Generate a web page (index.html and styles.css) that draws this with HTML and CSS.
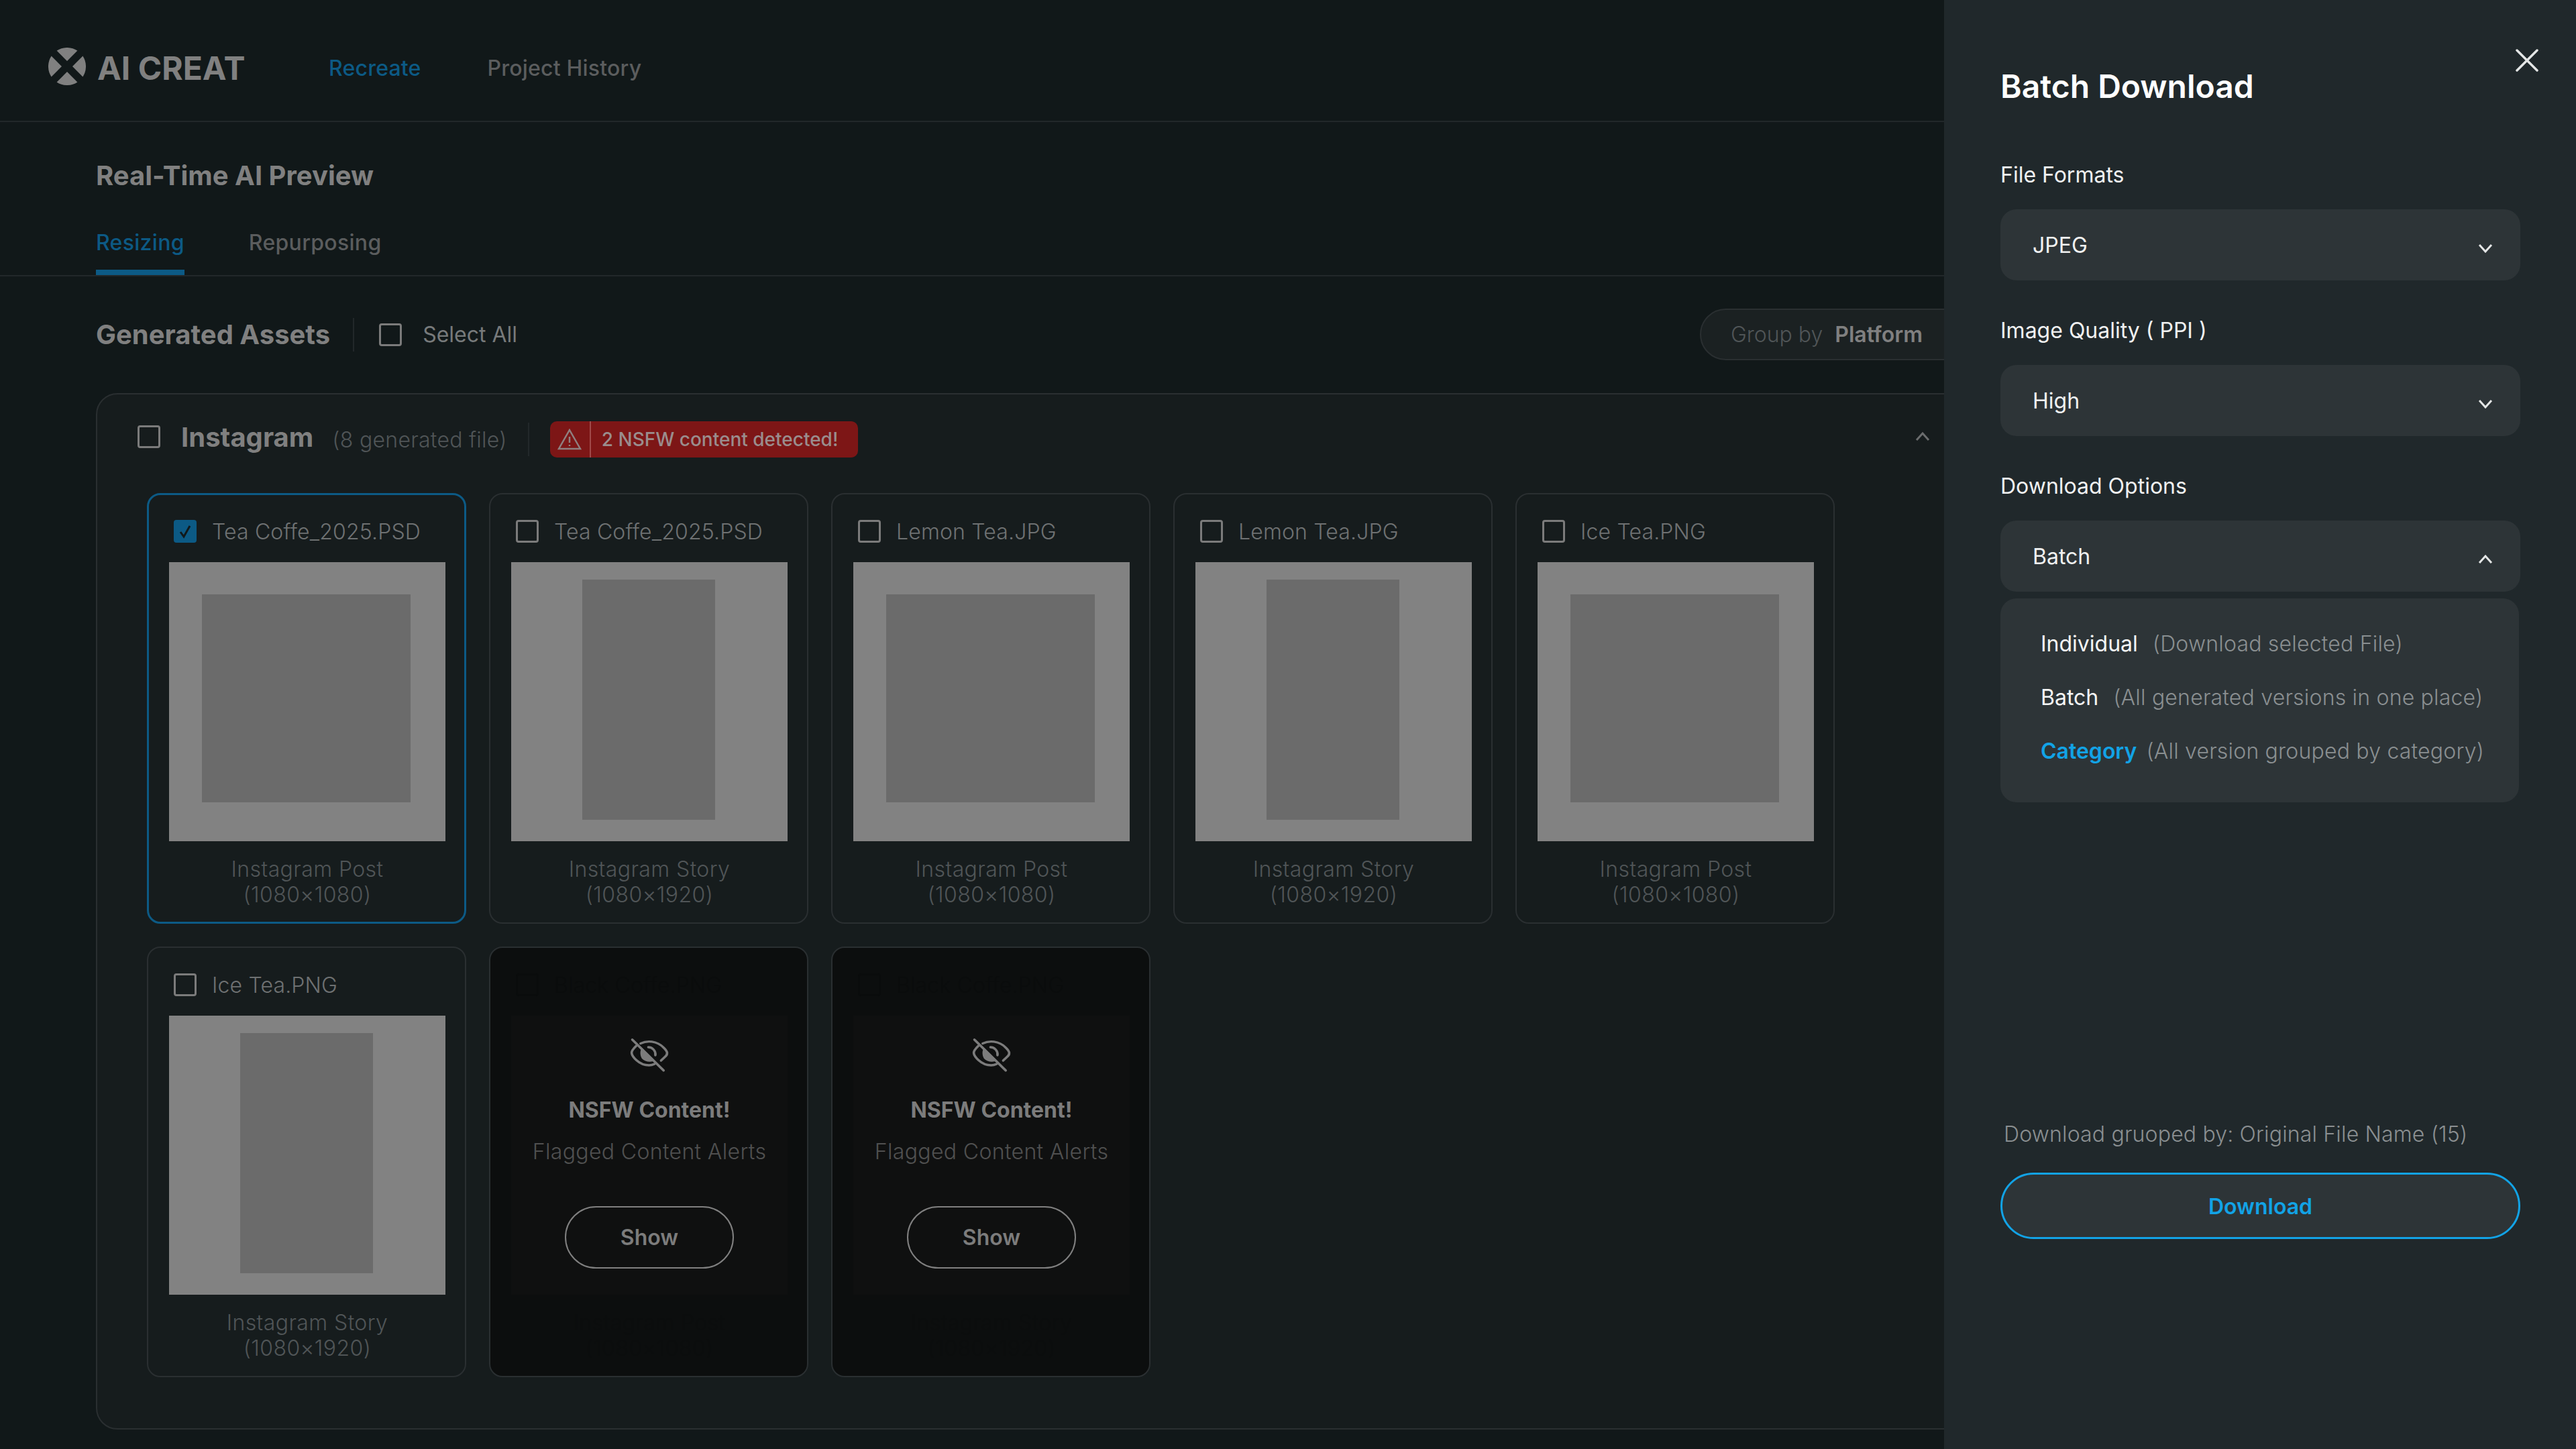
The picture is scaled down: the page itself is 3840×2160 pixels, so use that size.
FILE: index.html
```html
<!DOCTYPE html>
<html>
	<head>
		<meta http-equiv="content-type" content="text/html; charset=utf-8" />
		<title>AI CREAT - Batch Download</title>
		<link rel="stylesheet" href="styles.css">
	</head>
	<body>
		<div class="app">
			<header class="topbar">
				<div class="logo">
					<svg class="logo-mark" viewBox="0 0 56 56">
						<path d="M28 20 L12.6 4.6 A28 28 0 0 1 43.4 4.6 Z" />
						<path d="M28 36 L12.6 51.4 A28 28 0 0 0 43.4 51.4 Z" />
						<path d="M20 28 L4.6 12.6 A28 28 0 0 0 4.6 43.4 Z" />
						<path d="M36 28 L51.4 12.6 A28 28 0 0 1 51.4 43.4 Z" />
					</svg>
					<span class="logo-text">AI CREAT</span>
				</div>
				<nav class="nav">
					<a class="nav-link active">Recreate</a>
					<a class="nav-link">Project History</a>
				</nav>
			</header>

			<div class="heading">
				<h1 class="page-title">Real-Time AI Preview</h1>
				<div class="tabs">
					<a class="tab active">Resizing</a>
					<a class="tab">Repurposing</a>
				</div>
			</div>

			<main class="content">
				<div class="toolbar">
					<h2 class="assets-title">Generated Assets</h2>
					<span class="vline"></span>
					<span class="checkbox"></span>
					<span class="select-all">Select All</span>
					<div class="group-by">
						<span class="group-label">Group by</span>
						<span class="group-value">Platform</span>
						<svg class="chevron-small" viewBox="0 0 22 14"><path d="M2 2 L11 12 L20 2" /></svg>
					</div>
				</div>

				<section class="platform">
					<div class="platform-head">
						<span class="checkbox"></span>
						<span class="platform-name">Instagram</span>
						<span class="platform-count">(8 generated file)</span>
						<span class="vline"></span>
						<div class="badge">
							<span class="badge-icon">
								<svg viewBox="0 0 36 32"><path d="M18 2 L34 30 L2 30 Z" /><path d="M18 12 V21 M18 24 V26" /></svg>
							</span>
							<span class="badge-text">2 NSFW content detected!</span>
						</div>
						<svg class="chevron-up" viewBox="0 0 22 14"><path d="M2 12 L11 2 L20 12" /></svg>
					</div>

					<div class="cards">
						<div class="card selected">
							<div class="card-head">
								<span class="checkbox checked"><svg viewBox="0 0 34 34"><path d="M10 18 L15 25 L24 9" /></svg></span>
								<span class="card-name">Tea Coffe_2025.PSD</span>
							</div>
							<div class="preview"><div class="inner square"></div></div>
							<div class="caption">Instagram Post<br>(1080×1080)</div>
						</div>
						<div class="card">
							<div class="card-head">
								<span class="checkbox"></span>
								<span class="card-name">Tea Coffe_2025.PSD</span>
							</div>
							<div class="preview"><div class="inner story"></div></div>
							<div class="caption">Instagram Story<br>(1080×1920)</div>
						</div>
						<div class="card">
							<div class="card-head">
								<span class="checkbox"></span>
								<span class="card-name">Lemon Tea.JPG</span>
							</div>
							<div class="preview"><div class="inner square"></div></div>
							<div class="caption">Instagram Post<br>(1080×1080)</div>
						</div>
						<div class="card">
							<div class="card-head">
								<span class="checkbox"></span>
								<span class="card-name">Lemon Tea.JPG</span>
							</div>
							<div class="preview"><div class="inner story"></div></div>
							<div class="caption">Instagram Story<br>(1080×1920)</div>
						</div>
						<div class="card">
							<div class="card-head">
								<span class="checkbox"></span>
								<span class="card-name">Ice Tea.PNG</span>
							</div>
							<div class="preview"><div class="inner square"></div></div>
							<div class="caption">Instagram Post<br>(1080×1080)</div>
						</div>
						<div class="card">
							<div class="card-head">
								<span class="checkbox"></span>
								<span class="card-name">Ice Tea.PNG</span>
							</div>
							<div class="preview"><div class="inner story"></div></div>
							<div class="caption">Instagram Story<br>(1080×1920)</div>
						</div>
						<div class="card nsfw">
							<div class="card-head">
								<span class="checkbox"></span>
								<span class="card-name">Black Coffe.PNG</span>
							</div>
							<div class="preview">
								<svg class="eye-off" viewBox="0 0 56 56" preserveAspectRatio="none">
									<path d="M15 10.5 C24 6 38 6 48 17 C54 23 54 27 49 31 L44 36" />
									<path d="M9 14 C5 18 2 22 2.5 25 C3 29 12 43 27 43 C30 43 33 42 35 41" />
									<path d="M26 16 C32 16 37 22 36 28" />
									<path class="pupil" d="M17 17 L35 36 C30 39 21 38 17 33 C14 28 14 21 17 17 Z" />
									<path d="M3.3 4.7 L47.7 50.7" />
								</svg>
								<div class="nsfw-title">NSFW Content!</div>
								<div class="nsfw-sub">Flagged Content Alerts</div>
								<button class="show-btn">Show</button>
							</div>
							<div class="caption">Instagram Post<br>(1080×1080)</div>
						</div>
						<div class="card nsfw">
							<div class="card-head">
								<span class="checkbox"></span>
								<span class="card-name">Black Coffe.PNG</span>
							</div>
							<div class="preview">
								<svg class="eye-off" viewBox="0 0 56 56" preserveAspectRatio="none">
									<path d="M15 10.5 C24 6 38 6 48 17 C54 23 54 27 49 31 L44 36" />
									<path d="M9 14 C5 18 2 22 2.5 25 C3 29 12 43 27 43 C30 43 33 42 35 41" />
									<path d="M26 16 C32 16 37 22 36 28" />
									<path class="pupil" d="M17 17 L35 36 C30 39 21 38 17 33 C14 28 14 21 17 17 Z" />
									<path d="M3.3 4.7 L47.7 50.7" />
								</svg>
								<div class="nsfw-title">NSFW Content!</div>
								<div class="nsfw-sub">Flagged Content Alerts</div>
								<button class="show-btn">Show</button>
							</div>
							<div class="caption">Instagram Story<br>(1080×1920)</div>
						</div>
					</div>
				</section>
			</main>
		</div>

		<aside class="drawer">
			<svg class="close" viewBox="0 0 34 34"><path d="M2 2 L32 32 M32 2 L2 32" /></svg>
			<h2 class="drawer-title">Batch Download</h2>

			<label class="field-label first">File Formats</label>
			<div class="select">
				<span>JPEG</span>
				<svg class="chevron" viewBox="0 0 22 14"><path d="M2 2 L11 12 L20 2" /></svg>
			</div>

			<label class="field-label">Image Quality ( PPI )</label>
			<div class="select">
				<span>High</span>
				<svg class="chevron" viewBox="0 0 22 14"><path d="M2 2 L11 12 L20 2" /></svg>
			</div>

			<label class="field-label">Download Options</label>
			<div class="select">
				<span>Batch</span>
				<svg class="chevron" viewBox="0 0 22 14"><path d="M2 12 L11 2 L20 12" /></svg>
			</div>
			<ul class="options">
				<li class="option"><span class="option-name">Individual</span><span class="option-hint">(Download selected File)</span></li>
				<li class="option"><span class="option-name">Batch</span><span class="option-hint">(All generated versions in one place)</span></li>
				<li class="option current"><span class="option-name">Category</span><span class="option-hint">(All version grouped by category)</span></li>
			</ul>

			<p class="note">Download gruoped by: Original File Name (15)</p>
			<button class="download-btn">Download</button>
		</aside>
	</body>
</html>
```

FILE: styles.css
```css
* {
	box-sizing: border-box;
}
html, body {
	margin: 0;
	width: 3840px;
	height: 2160px;
	overflow: hidden;
}
body {
	position: relative;
	background: #111819;
	font-family: "Inter", "Liberation Sans", sans-serif;
	font-size: 32px;
}
h1, h2, p, ul {
	margin: 0;
	padding: 0;
}

.topbar {
	display: flex;
	align-items: center;
	height: 182px;
	padding-top: 22px;
	padding-left: 72px;
	border-bottom: 2px solid #22282a;
}
.logo {
	display: flex;
	align-items: center;
	gap: 17px;
	width: 418px;
}
.logo-mark {
	width: 56px;
	height: 56px;
	margin-top: -4px;
	fill: #808080;
}
.logo-text {
	font-size: 48px;
	font-weight: 700;
	color: #808080;
}
.nav {
	display: flex;
	gap: 99px;
	letter-spacing: 0.2px;
}
.nav-link {
	font-weight: 500;
	color: #5b5d5e;
}
.nav-link.active {
	color: #0c5a85;
}

.heading {
	padding-top: 56px;
}
.page-title {
	padding-left: 143px;
	font-size: 40px;
	line-height: 48px;
	font-weight: 700;
	color: #808080;
}
.tabs {
	display: flex;
	gap: 96px;
	margin-top: 56px;
	padding-left: 143px;
	border-bottom: 2px solid #22282a;
}
.tab {
	height: 68px;
	line-height: 40px;
	border-bottom: 8px solid transparent;
	font-weight: 500;
	letter-spacing: 0.3px;
	color: #5b5d5e;
}
.tab.active {
	color: #0c5a85;
	border-bottom-color: #0c5a85;
}

.content {
	width: 2960px;
	padding-left: 143px;
}
.toolbar {
	display: flex;
	align-items: center;
	height: 77px;
	margin-top: 48px;
}
.assets-title {
	font-size: 40px;
	font-weight: 700;
	color: #808080;
}
.vline {
	width: 2px;
	height: 50px;
	background: #22282a;
}
.toolbar .vline {
	margin: 0 37px 0 34px;
}
.select-all {
	margin-left: 31px;
	color: #777a7b;
}
.group-by {
	display: flex;
	align-items: center;
	height: 77px;
	margin-left: auto;
	padding: 0 38px 0 44px;
	border: 2px solid #2a2f31;
	border-radius: 40px;
	background: #1b2122;
}
.group-label {
	font-weight: 300;
	color: #505557;
}
.group-value {
	margin-left: 18px;
	font-weight: 600;
	color: #808080;
}
.chevron-small {
	width: 22px;
	height: 14px;
	margin-left: 32px;
	fill: none;
	stroke: #808080;
	stroke-width: 3;
}

.checkbox {
	display: block;
	flex: none;
	width: 34px;
	height: 34px;
	border: 3px solid #7b7b7b;
	border-radius: 4px;
}
.checkbox.checked {
	border: 0;
	background: #0c5a85;
}
.checkbox svg {
	display: block;
	fill: none;
	stroke: #11181a;
	stroke-width: 3;
}

.platform {
	margin-top: 49px;
	height: 1545px;
	padding: 40px 0 0 60px;
	background: #161c1d;
	border: 2px solid #2a2f31;
	border-radius: 32px;
}
.platform-head {
	display: flex;
	align-items: center;
	height: 54px;
}
.platform-head .checkbox {
	margin-bottom: 8px;
}
.platform-name {
	margin-left: 31px;
	margin-bottom: 8px;
	font-size: 40px;
	font-weight: 700;
	color: #808080;
}
.platform-count {
	margin-left: 28px;
	font-weight: 300;
	letter-spacing: 0.28px;
	color: #505557;
}
.platform-head .vline {
	margin: 0 31px 0 31px;
}
.badge {
	display: flex;
	align-items: center;
	height: 54px;
	padding-right: 30px;
	border-radius: 10px;
	background: #7d1616;
}
.badge-icon {
	display: flex;
	align-items: center;
	justify-content: center;
	width: 61px;
	height: 54px;
	border-right: 2px solid #a04a4a;
}
.badge-icon svg {
	width: 36px;
	height: 32px;
	fill: none;
	stroke: #8f8080;
	stroke-width: 2.5;
}
.badge-text {
	margin-left: 16px;
	font-size: 28px;
	font-weight: 500;
	color: #9a8d8d;
}
.chevron-up {
	width: 22px;
	height: 14px;
	margin-left: auto;
	margin-right: 81px;
	margin-bottom: 8px;
	fill: none;
	stroke: #6b6d6e;
	stroke-width: 3;
}

.cards {
	display: grid;
	grid-template-columns: repeat(5, 476px);
	column-gap: 34px;
	row-gap: 34px;
	margin-top: 53px;
	margin-left: 14px;
}
.card {
	height: 642px;
	padding: 38px 29px 0 31px;
	border: 2px solid #2a2f31;
	border-radius: 20px;
	background: #161c1d;
}
.card.selected {
	border: 3px solid #0c5a85;
	padding: 37px 28px 0 30px;
}
.card-head {
	display: flex;
	align-items: center;
	gap: 23px;
	height: 34px;
	margin-bottom: 29px;
	padding-left: 7px;
}
.card-name {
	font-weight: 300;
	letter-spacing: 0.15px;
	color: #6e7172;
	white-space: nowrap;
}
.preview {
	display: flex;
	align-items: center;
	justify-content: center;
	width: 412px;
	height: 416px;
	background: #828282;
}
.inner {
	background: #6b6b6b;
}
.inner.square {
	width: 311px;
	height: 310px;
	margin: 0 4px 10px 0;
}
.inner.story {
	width: 198px;
	height: 358px;
	margin: 0 2px 6px 0;
}
.caption {
	margin-top: 23px;
	line-height: 38px;
	text-align: center;
	font-weight: 300;
	letter-spacing: 0.4px;
	color: #505557;
}

.card.nsfw {
	background: #0c0e0e;
}
.nsfw .checkbox {
	border-color: #0a0c0c;
}
.nsfw .card-name {
	color: #0a0c0c;
}
.nsfw .caption {
	color: #0b0d0d;
}
.nsfw .preview {
	flex-direction: column;
	justify-content: flex-start;
	padding-top: 31px;
	background: #0f1010;
}
.eye-off {
	flex: none;
	width: 59px;
	height: 56px;
	fill: none;
	stroke: #7c7c7c;
	stroke-width: 3.4;
	stroke-linecap: round;
}
.eye-off .pupil {
	fill: #7c7c7c;
	stroke: none;
}
.nsfw-title {
	margin-top: 32px;
	line-height: 44px;
	font-weight: 700;
	color: #7c7c7c;
}
.nsfw-sub {
	margin-top: 20px;
	line-height: 40px;
	font-weight: 300;
	letter-spacing: 0.35px;
	color: #505050;
}
.show-btn {
	width: 252px;
	height: 93px;
	margin-top: 61px;
	border: 2px solid #808080;
	border-radius: 47px;
	background: transparent;
	font-family: inherit;
	font-size: 32px;
	font-weight: 600;
	color: #7c7c7c;
}

/* drawer sits over the dimmed page */
.drawer {
	position: absolute;
	top: 0;
	right: 0;
	bottom: 0;
	width: 942px;
	padding: 100px 82px 0 84px;
	background: #20282b;
}
.close {
	position: absolute;
	top: 73px;
	left: 852px;
	width: 34px;
	height: 34px;
	fill: none;
	stroke: #e4e6e6;
	stroke-width: 3.5;
	stroke-linecap: round;
}
.drawer-title {
	font-size: 48px;
	line-height: 58px;
	font-weight: 600;
	color: #ffffff;
}
.field-label {
	display: block;
	margin-top: 54px;
	padding-top: 1px;
	margin-bottom: -1px;
	line-height: 40px;
	color: #f0f1f1;
}
.field-label.first {
	margin-top: 82px;
}
.select {
	display: flex;
	align-items: center;
	justify-content: space-between;
	width: 775px;
	height: 106px;
	margin-top: 32px;
	padding: 0 41px 0 48px;
	border-radius: 24px;
	background: #2d3437;
	color: #f0f1f1;
}
.chevron {
	width: 22px;
	height: 14px;
	margin-top: 10px;
	fill: none;
	stroke: #e4e6e6;
	stroke-width: 3;
}
.options {
	width: 773px;
	height: 304px;
	margin-top: 10px;
	padding: 27px 0 0 60px;
	border-radius: 24px;
	background: #2d3437;
	list-style: none;
}
.option {
	display: flex;
	align-items: center;
	height: 80px;
	white-space: nowrap;
}
.option-name {
	color: #f5f6f6;
}
.option-hint {
	margin-left: 22px;
	font-weight: 300;
	letter-spacing: 0.2px;
	color: #8a8f91;
}
.option.current .option-name {
	font-weight: 600;
	color: #12a3e6;
}
.option.current .option-hint {
	margin-left: 14px;
}
.note {
	margin-top: 475px;
	padding-left: 5px;
	line-height: 40px;
	font-weight: 300;
	letter-spacing: 0.17px;
	color: #8a8f91;
}
.download-btn {
	width: 775px;
	height: 99px;
	margin-top: 37px;
	padding-top: 3px;
	border: 3px solid #12a3e6;
	border-radius: 50px;
	background: #2d3437;
	font-family: inherit;
	font-size: 32px;
	font-weight: 600;
	color: #12a3e6;
}
```
